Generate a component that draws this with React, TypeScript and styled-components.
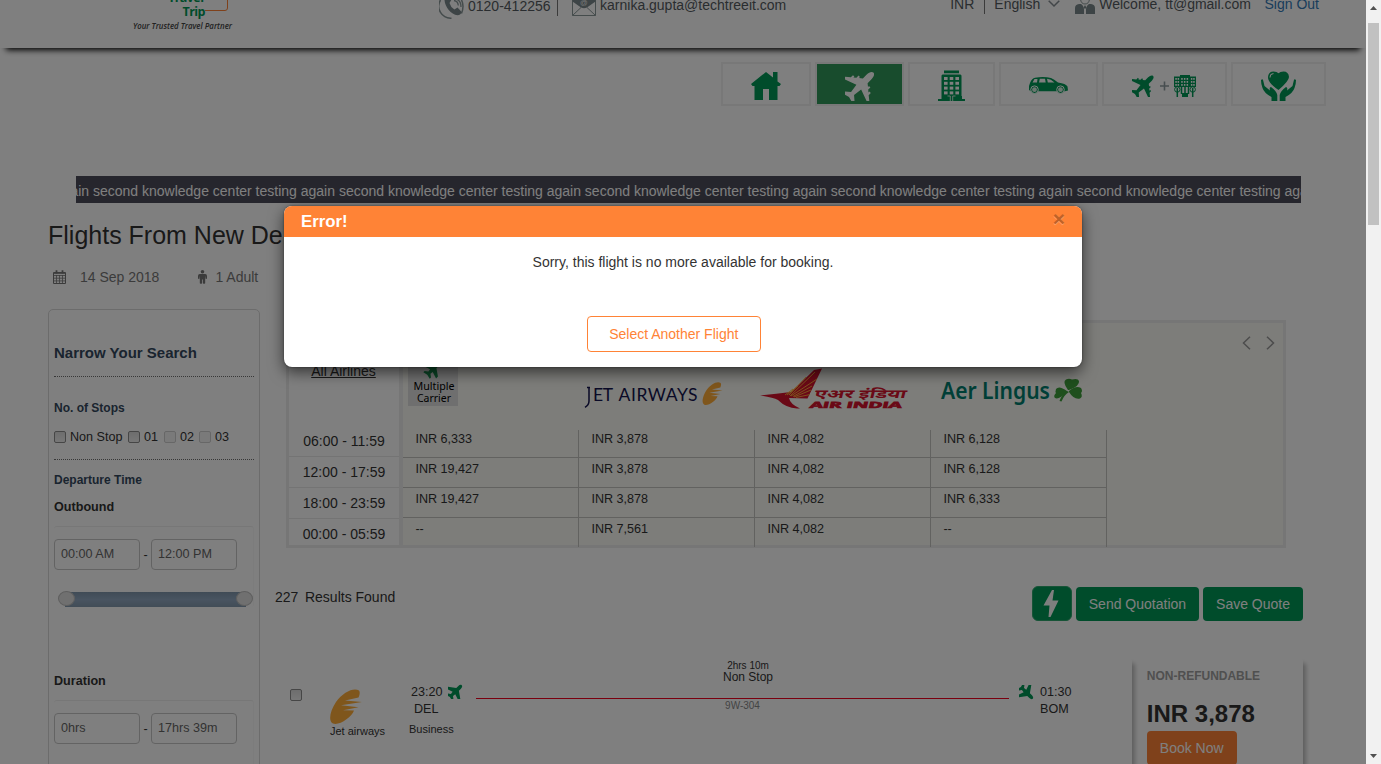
import React from "react";
import styled, { createGlobalStyle } from "styled-components";

const GREEN = "#009856";
const ORANGE = "#ff8336";
const NAVY = "#34495e";

const Global = createGlobalStyle`
  * { box-sizing: border-box; }
  body {
    margin: 0;
    overflow: hidden;
    background: #fff;
    color: #333;
    font: 14px/20px "Liberation Sans", Arial, sans-serif;
  }
  svg { display: block; flex: none; }
`;

const Screen = styled.div`
  display: flex;
  width: 1381px;
  height: 764px;
  overflow: hidden;
`;
const Page = styled.div`
  position: relative;
  width: 1366px;
  height: 764px;
  overflow: hidden;
  background: #fff;
`;

/* ---------- scrollbar ---------- */
const ScrollTrack = styled.div`
  width: 15px;
  background: #f1f1f1;
  display: flex;
  flex-direction: column;
  align-items: center;
  justify-content: space-between;
  padding: 6px 0;
`;
const ScrollThumb = styled.div`
  width: 11px;
  height: 202px;
  margin-top: 13px;
  margin-bottom: auto;
  background: #c1c1c1;
`;

/* ---------- header ---------- */
const Header = styled.header`
  height: 48px;
  display: flex;
  align-items: flex-start;
  box-shadow: 0 8px 6px -6px #000;
`;
const LogoBox = styled.div`
  margin-left: 130px;
  width: 309px;
`;
const HeaderText = styled.span<{ $left?: number; $up?: number; $link?: boolean }>`
  margin-left: ${(p) => p.$left ?? 0}px;
  margin-top: ${(p) => -(p.$up ?? 5)}px;
  white-space: nowrap;
  color: ${(p) => (p.$link ? "#337ab7" : "#555b60")};
`;
const Divider = styled.i<{ $left: number; $h: number }>`
  width: 1px;
  height: ${(p) => p.$h}px;
  margin-left: ${(p) => p.$left}px;
  background: #777;
`;
const IconSlot = styled.div<{ $left: number }>`
  margin-left: ${(p) => p.$left}px;
`;
const AccountArea = styled.div`
  margin-left: auto;
  margin-right: 47px;
  display: flex;
`;

/* ---------- category navigation ---------- */
const Nav = styled.nav`
  display: flex;
  gap: 4px;
  margin: 14px 0 0 721px;
`;
const NavTile = styled.a<{ $w: number; $active?: boolean }>`
  width: ${(p) => p.$w}px;
  height: 44px;
  padding: 3px ${(p) => (p.$active ? 0 : 1)}px 0 ${(p) => (p.$active ? 1 : 0)}px;
  border: 2px solid #f0f0f0;
  background: ${(p) => (p.$active ? "#30985a" : "#fff")};
  display: flex;
  align-items: center;
  justify-content: center;
  gap: 5px;
`;

const Marquee = styled.div`
  width: 1225px;
  height: 27px;
  margin: 70px 0 0 76px;
  padding-top: 5px;
  background: #4c4c5a;
  color: #fff;
  overflow: hidden;
  white-space: nowrap;
`;
const MarqueeText = styled.div`
  margin-left: -21.2px;
`;

const Title = styled.h1`
  margin: 18px 0 0 48px;
  font-size: 25px;
  line-height: 28px;
  font-weight: 400;
`;
const TripInfo = styled.div`
  display: flex;
  align-items: center;
  margin: 18px 0 0 53px;
  height: 20px;
  color: #777;
`;
const TripText = styled.span<{ $left: number }>`
  margin-left: ${(p) => p.$left}px;
`;

const Main = styled.main`
  display: flex;
  align-items: flex-start;
  margin: 22px 0 0 48px;
`;

/* ---------- filters ---------- */
const Sidebar = styled.aside`
  width: 212px;
  height: 500px;
  border: 1px solid #d8d8d8;
  border-radius: 5px;
  padding: 33px 5px 0;
  flex: none;
`;
const SideTitle = styled.h2`
  margin: 0;
  padding-bottom: 13px;
  border-bottom: 1px dotted #707070;
  font-size: 15px;
  line-height: 20px;
  color: ${NAVY};
`;
const FilterTitle = styled.h3<{ $top: number; $plain?: boolean }>`
  margin: ${(p) => p.$top}px 0 0;
  font-size: ${(p) => (p.$plain ? 12.6 : 12)}px;
  line-height: 20px;
  color: ${(p) => (p.$plain ? "#333" : NAVY)};
`;
const StopsRow = styled.div`
  display: flex;
  align-items: center;
  margin-top: 9px;
  padding-bottom: 12px;
  border-bottom: 1px dotted #707070;
  font-size: 12.6px;
`;
const StopLabel = styled.label<{ $w: number }>`
  display: flex;
  align-items: center;
  gap: 4px;
  width: ${(p) => p.$w}px;
  white-space: nowrap;
`;
const Box = styled.span<{ $off?: boolean }>`
  width: 12px;
  height: 12px;
  flex: none;
  border: 1px solid ${(p) => (p.$off ? "#cfcfcf" : "#8c8c8c")};
  border-radius: 2px;
  background: ${(p) => (p.$off ? "#f4f4f4" : "linear-gradient(#dcdcdc, #f0f0f0)")};
`;
const RangeBox = styled.div`
  margin-top: 9px;
  height: 81px;
  padding-top: 12px;
  border-top: 1px solid #efefef;
  border-right: 1px solid #f8f8f8;
  border-radius: 3px;
`;
const RangeInputs = styled.div`
  display: flex;
  align-items: center;
  font-size: 12.6px;
`;
const RangeField = styled.div`
  width: 86px;
  height: 31px;
  padding: 4px 6px;
  border: 1px solid #c6c6c6;
  border-radius: 4px;
  color: #666;
`;
const Dash = styled.span`
  width: 11px;
  text-align: center;
`;
const Slider = styled.div`
  display: flex;
  align-items: center;
  margin: 21px 0 0 4px;
  height: 15px;
`;
const SliderBar = styled.div`
  flex: 1;
  height: 15px;
  margin: 1px -10px -1px;
  background: linear-gradient(#8096ac, #92a9c2 50%, #8399ae);
`;
const SliderKnob = styled.div`
  position: relative;
  width: 17px;
  height: 15px;
  border-radius: 50%;
  border: 1px solid #bdbdbd;
  background: #e0e0e0;
`;

/* ---------- fare matrix ---------- */
const Content = styled.section`
  flex: 1;
`;
const Matrix = styled.div`
  display: flex;
  width: 1000px;
  height: 228px;
  margin: 11px 0 0 26px;
  border: 3px solid #ededed;
`;
const TimeCol = styled.div`
  width: 114px;
  height: 222px;
  overflow: hidden;
  border-right: 4px solid #ededed;
  text-align: center;
`;
const AllAirlines = styled.div`
  margin: 38px 0 45px;
  padding-right: 1px;
  text-decoration: underline;
`;
const TimeSlot = styled.div`
  height: 31px;
  padding-top: 5px;
  border-bottom: 1px solid #e8e8e8;
`;
const Fares = styled.div`
  flex: 1;
  background: #fafaf5;
`;
const LogoRow = styled.div`
  display: flex;
  height: 107px;
`;
const LogoCell = styled.div`
  width: 176px;
  height: 107px;
  padding: 37px 0 0 5px;
`;
const Arrows = styled.div`
  display: flex;
  gap: 15px;
  margin: 13px 8.5px 0 auto;
`;
const FareRow = styled.div<{ $h: number }>`
  display: flex;
  height: ${(p) => p.$h}px;
`;
const FareCell = styled.div<{ $first?: boolean; $last?: boolean }>`
  width: 176px;
  padding: ${(p) => (p.$first ? 0 : 1)}px 0 0 12.4px;
  border-right: 1px solid #c4c4c0;
  border-bottom: ${(p) => (p.$last ? "none" : "1px solid #c4c4c0")};
  font-size: 12.6px;
  line-height: ${(p) => (p.$first ? 18 : 20)}px;
`;

/* ---------- results ---------- */
const ResultsBar = styled.div`
  display: flex;
  align-items: flex-start;
  gap: 4px;
  width: 1028px;
  margin: 38px 0 0 15px;
`;
const Count = styled.span`
  margin: 1px 2.6px 0 0;
`;
const Found = styled.span`
  margin: 1px auto 0 0;
`;
const QuickButton = styled.button`
  width: 40px;
  height: 35px;
  padding: 0 1px 0 0;
  display: flex;
  align-items: center;
  justify-content: center;
  border: 1px solid #2fa86f;
  border-radius: 6px;
  background: ${GREEN};
`;
const Button = styled.button<{ $bg: string }>`
  height: 34px;
  margin-top: 1px;
  padding: 6px 13px;
  border: 0;
  border-radius: 4px;
  background: ${(p) => p.$bg};
  color: #fff;
  font: 14px/20px "Liberation Sans", Arial, sans-serif;
  white-space: nowrap;
`;
const Flight = styled.div`
  display: flex;
  margin: 37px 0 0 15px;
  height: 140px;
`;
const FlightCard = styled.div`
  display: flex;
  align-items: flex-start;
  width: 857px;
  padding: 0 0 0 15px;
  border-radius: 4px;
  box-shadow: 4px 4px 4px -1px rgba(0, 0, 0, 0.25);
  clip-path: inset(0 -10px 0 0);
`;
const PickBox = styled.div`
  width: 40px;
  padding-top: 31px;
`;
const Airline = styled.div`
  width: 79px;
  padding-top: 31px;
  font-size: 11px;
  line-height: 14px;
`;
const Endpoint = styled.div<{ $w: number }>`
  width: ${(p) => p.$w}px;
  padding-top: 26px;
  font-size: 12.6px;
  line-height: 17px;
`;
const EndLine = styled.div<{ $left?: number }>`
  display: flex;
  gap: 5px;
  padding-left: ${(p) => p.$left ?? 0}px;
  white-space: nowrap;
`;
const Cabin = styled.div`
  margin-top: 4px;
  font-size: 11px;
  line-height: 14px;
`;
const Leg = styled.div`
  width: 533px;
  padding: 2px 0 0;
  text-align: center;
`;
const LegText = styled.div<{ $size: number; $lh: number; $muted?: boolean; $shift?: number }>`
  font-size: ${(p) => p.$size}px;
  line-height: ${(p) => p.$lh}px;
  padding-left: ${(p) => p.$shift ?? 11}px;
  color: ${(p) => (p.$muted ? "#888" : "#333")};
`;
const LegLine = styled.div`
  height: 1px;
  margin: 15px 0 1px;
  background: #f5001e;
`;
const ArriveIcon = styled.div`
  padding: 27px 6px 0 10px;
`;
const PriceCard = styled.div`
  width: 171px;
  padding: 8px 0 0 14.8px;
  border-radius: 4px;
  box-shadow: 4px 4px 4px -1px rgba(0, 0, 0, 0.25);
  clip-path: inset(0 -10px 0 0);
`;
const Refund = styled.div`
  font-size: 12px;
  font-weight: 700;
  color: #a0a0a0;
`;
const Price = styled.div`
  margin: 14px 0 2px;
  font-size: 24px;
  line-height: 28px;
  font-weight: 700;
`;

/* ---------- dialog ---------- */
const Backdrop = styled.div`
  position: absolute;
  inset: 0;
  padding: 206px 0 0 284px;
  background: rgba(0, 0, 0, 0.5);
`;
const Dialog = styled.div`
  width: 798px;
  height: 161px;
  border-radius: 8px;
  background: #fff;
  overflow: hidden;
  box-shadow: 0 5px 15px rgba(0, 0, 0, 0.6), 0 0 2px rgba(0, 0, 0, 0.5);
`;
const DialogHead = styled.div`
  display: flex;
  justify-content: space-between;
  height: 31px;
  padding: 6px 17px 0;
  background: ${ORANGE};
  color: #fff;
  font-size: 16.8px;
  font-weight: 700;
`;
const Close = styled.span`
  margin-top: -3px;
  font-size: 21px;
  color: #000;
  opacity: 0.25;
  text-shadow: 0 1px 0 #fff;
`;
const DialogBody = styled.div`
  display: flex;
  flex-direction: column;
  align-items: center;
  padding-top: 15px;
`;
const OutlineButton = styled.button`
  width: 174px;
  height: 36px;
  margin: 44px 18px 0 0;
  padding: 0 0.5px 0 0;
  border: 1px solid ${ORANGE};
  border-radius: 4px;
  background: #fff;
  color: ${ORANGE};
  font: 14px/20px "Liberation Sans", Arial, sans-serif;
`;

/* ---------- drawings ---------- */
const JET =
  "M12 0C13.5 0 14.200 2 14.200 4V7.600L16.200 9.200V8.300H17.500V10.300L19 11.600V10.700H20.300V12.700L23.200 15V16.800L14.200 13.600L13.400 19.400L16.800 22.300V24L12 22.700L7.200 24V22.300L10.600 19.400L9.800 13.600L.8 16.800V15L3.700 12.700V10.700H5V11.600L6.500 10.300V8.300H7.800V9.200L9.800 7.600V4C9.800 2 10.500 0 12 0Z";
const SMALL_JET =
  "M12 0C13.800 0 14.500 2 14.500 4V8L23.800 14.500V18L14.500 15L14 18.800L18 21.800V24.200L12 22.800L6 24.200V21.800L10 18.800L9.500 15L.2 18V14.500L9.500 8V4C9.500 2 10.200 0 12 0Z";

const Plane = ({ size, color = GREEN, turn = 45 }: { size: number; color?: string; turn?: number }) => (
  <svg width={size} height={size} viewBox="1.8 1.8 20.4 20.4">
    <path d={size < 20 ? SMALL_JET : JET} fill={color} transform={`rotate(${turn} 12 12)`} />
  </svg>
);

const BrandLogo = () => (
  <svg width="110" height="34" viewBox="130 0 110 34">
    <g fontFamily="'Open Sans', sans-serif" fontWeight="700">
      <text x="168" y="1.500" fontSize="12.500" fill={GREEN} textLength="36">Travel</text>
      <text x="182.5" y="16.200" fontSize="12.500" fill={GREEN} textLength="23">Trip</text>
      <text x="133" y="29" fontSize="8.600" fontStyle="italic" fontWeight="600" fill="#444" textLength="99" lengthAdjust="spacingAndGlyphs">
        Your Trusted Travel Partner
      </text>
    </g>
    <path d="M205 10.5H225Q227.5 10.5 227.5 8V-1" fill="none" stroke={ORANGE} />
  </svg>
);

const PhoneIcon = () => (
  <svg width="25" height="19" viewBox="0 0 25 19" fill="none">
    <path d="M1.500 0A12 12 0 0 0 12.5 18.2" stroke="#8a9899" strokeWidth="1.500" />
    <path d="M22.5 0Q25.5 6 22.5 13.5" stroke="#8a9899" strokeWidth="1.500" />
    <path d="M5.500 0C6 7 12 14.5 18.5 15.3Q22 15 22.7 12L18.5 7.6L15.4 9.6Q11.5 7 10.5 3L12.3 0Z" fill="#7b898c" />
    <path d="M15 .5Q19 1 19.3 5.5M18 -.5Q22 1 22 7" stroke="#8a9899" strokeWidth="1.300" />
  </svg>
);

const MailIcon = () => (
  <svg width="24" height="16" viewBox="0 0 24 16">
    <path d="M.5 0V15.500H23.5V0" fill="none" stroke="#8a9899" />
    <path d="M.5 0H23.5V1.500L15 7.500Q12 9 9 7.500L.5 1.500Z" fill="#7b898c" />
    <path d="M.5 15.500L9 7.500M23.5 15.500L15 7.500" stroke="#8a9899" />
    <text x="8" y="4.500" fontSize="7.500" fill="#eee" fontFamily="Liberation Sans">@</text>
  </svg>
);

const UsersIcon = () => (
  <svg width="20" height="14" viewBox="0 0 20 14">
    <path d="M0 14V8Q0 4.500 4 4H6Q9 6 9 9.500V14ZM11 14V9.500Q11 6 14 4H16Q20 4.500 20 8V14Z" fill="#7b898c" />
    <path d="M5.500 -1Q6 4 10 4T14.500 -1" fill="none" stroke="#8a9899" />
    <path d="M10 5L8.600 7.500L10 9L11.400 7.500Z" fill="#7b898c" />
  </svg>
);

const HomeIcon = () => (
  <svg width="30" height="30" viewBox="0 0 30 30" fill={GREEN}>
    <path d="M0 13L15 1L22 6.500V1H26.500V10.500L30 13L28.500 15H26.500V29H18V18H12V29H3.500V15H1.500Z" />
  </svg>
);

const TowerIcon = () => (
  <svg width="27" height="31" viewBox="0 0 27 31">
    <path d="M6 .5H21V3.300H6ZM4.500 4.500H22.500L23.500 5.500V26H24V29H27V31H0V29H3.500V5.500Z" fill={GREEN} />
    {[7, 11.800, 16.600, 21.400].map((y) =>
      [6, 11.700, 17.400].map((x) => <rect key={`${x}-${y}`} x={x} y={y} width="3.600" height="3" fill="#fff" />)
    )}
    <path d="M9.500 26H12.300V31M17.500 26H14.700V31" fill="none" stroke="#fff" strokeWidth=".8" />
  </svg>
);

const CarIcon = () => (
  <svg width="39" height="17" viewBox="0 0 39 17">
    <path d="M1 6Q3 1 6 .7Q15 -.6 22 1Q25 2 29 5.500Q37 6.500 38.500 9.500L39 13.500L36 14.300H2L0 13V9Z" fill={GREEN} />
    <path d="M3.500 5.500L5.500 2H8.500L8 5.500ZM10 5.500L10.800 1.800H16L16.700 5.500ZM18 1.800Q22 2 25.500 5.500H18.800Z" fill="#fff" />
    <g fill={GREEN} stroke="#fff" strokeWidth="1">
      <circle cx="5.500" cy="12.700" r="3.800" />
      <circle cx="31.500" cy="12.700" r="3.800" />
    </g>
    <g fill="#d9efe3">
      <circle cx="5.500" cy="12.700" r="2.400" />
      <circle cx="31.500" cy="12.700" r="2.400" />
    </g>
  </svg>
);

const PlusIcon = () => (
  <svg width="9" height="10" viewBox="0 0 9 10">
    <path d="M0 5H9M4.500 .5V9.500" stroke="#8f9ca0" strokeWidth="1.600" />
  </svg>
);

const HotelIcon = () => (
  <svg width="22" height="22" viewBox="0 0 22 22">
    <path d="M6 0H16V1.500H22V12H0V1.500H6Z" fill={GREEN} />
    <g fill="#fff">
      {[3, 6, 9].map((y) =>
        [1.300, 3.600, 7.200, 9.900, 12.600, 16.900, 19.200].map((x) => (
          <rect key={`${x}-${y}`} x={x} y={y} width="1.500" height="1.800" />
        ))
      )}
    </g>
    <g fill="none" stroke={GREEN}>
      <circle cx="3.300" cy="14.500" r="2.700" />
      <circle cx="18.700" cy="14.500" r="2.700" />
      <path d="M3.300 13V22M18.700 13V22M7.500 12V19M11 12V19M14.500 12V19" strokeWidth="1.500" />
    </g>
    <path d="M8 18H14V22H8Z" fill={GREEN} />
  </svg>
);

const HAND =
  "M0 9Q2 7 2.300 10L3.500 15L9 19.500Q8 16.500 10 16Q15.500 20 16.300 24V30H10.500V26Q3 22 1.500 17Q0 13 0 9Z";

const CareIcon = () => (
  <svg width="35" height="30" viewBox="0 0 35 30">
    <path d="M17.500 19C10 14 7 10 7 6Q7.500 .5 12.500 .5Q16 .5 17.500 2.200Q19 .5 22.500 .5Q27.500 .5 28 6Q28 10 17.500 19Z" fill={GREEN} />
    <path d="M9 6.500Q9 3 12.500 2.500" fill="none" stroke="#fff" strokeWidth="1.100" />
    <g fill={GREEN}>
      <path d={HAND} />
      <path d={HAND} transform="matrix(-1 0 0 1 35 0)" />
    </g>
  </svg>
);

const CalendarIcon = () => (
  <svg width="13" height="14" viewBox="0 0 13 14" fill="none" stroke="#777">
    <path d="M.5 2.500H12.500V13.500H.5Z" />
    <path d="M.5 3.500H12.500M.5 5.500H12.500M.5 8.200H12.500M.5 10.900H12.500M3.500 5V13.500M6.500 5V13.500M9.500 5V13.500" strokeWidth=".8" />
    <path d="M3.500 .3V3.500M9.500 .3V3.500" strokeWidth="1.800" />
  </svg>
);

const ManIcon = () => (
  <svg width="9" height="14" viewBox="0 0 9 14" fill="#777">
    <circle cx="4.500" cy="1.800" r="1.800" />
    <path d="M1.800 4H7.200Q9 4.200 9 6V8.500Q8.300 9.300 7.500 8.500V6.500H7.200V13.200Q6 14.500 4.900 13.200V9.500H4.100V13.200Q3 14.500 1.800 13.200V6.500H1.500V8.500Q.7 9.300 0 8.500V6Q0 4.200 1.800 4Z" />
  </svg>
);

const Chevron = ({ d, w, h, color }: { d: string; w: number; h: number; color: string }) => (
  <svg width={w} height={h} viewBox={`0 0 ${w} ${h}`}>
    <path d={d} fill="none" stroke={color} strokeWidth="1.500" />
  </svg>
);

const FEATHER =
  "M29 1.500C24-2 13 3 6 13C0 22-2 32 3 34.500C9 37 22 28 24 21.500L13 21.200L28.500 18.200L11 16.300L32 13L15 11.500L28.500 8.500C30 5 30 2.500 29 1.500Z";

const JetFeather = () => (
  <svg width="32" height="35" viewBox="0 0 32 35">
    <path d={FEATHER} fill="#ffac38" />
  </svg>
);

const MultiCarrier = () => (
  <svg width="50" height="46" viewBox="0 0 50 46">
    <rect width="50" height="46" fill="#dedede" />
    <g transform="translate(16 0) scale(.75)">
      <path d={SMALL_JET} fill="#168a4c" transform="rotate(45 12 12)" />
    </g>
    <g fontFamily="'Noto Sans', sans-serif" fontSize="10.500" fill="#000">
      <text x="5.500" y="29.700" textLength="41" lengthAdjust="spacingAndGlyphs">Multiple</text>
      <text x="9" y="41.700" textLength="34" lengthAdjust="spacingAndGlyphs">Carrier</text>
    </g>
  </svg>
);

const JetAirways = () => (
  <svg width="144" height="50" viewBox="584 360 144 50">
    <g fill="#14144e" fontFamily="Lato, sans-serif">
      <text x="593" y="401" fontSize="17.500" textLength="20">ET</text>
      <text x="618.500" y="401" fontSize="17.500" textLength="79">AIRWAYS</text>
    </g>
    <path d="M587 387.500H590M589 387.500V401Q589 405 585 407.300" fill="none" stroke="#14144e" strokeWidth="1.500" />
    <g transform="translate(702.500 382) scale(.625 .657)">
      <path d={FEATHER} fill="#ffac38" />
    </g>
  </svg>
);

const AirIndia = () => (
  <svg width="153" height="50" viewBox="760 360 153 50">
    <path d="M822 368.500L814 370Q803 381 791 392Q775 394 760 395.500Q773 397.500 778 400Q786 408 797 408.500H800Q790 404 789 398L807.500 398.500Z" fill="#d4122d" />
    <g stroke="#ffb53a" strokeWidth=".9">
      <path d="M790 396L815 372M791 396L817 379M793 396.500L812 386M794 397L811 390M796 397.500L810 394.500M789 395L806 377M787 395L798 386M785 395L793 389" />
    </g>
    <g fill="#d4122d" fontWeight="700" transform="skewX(-14)">
      <text x="913" y="398.500" fontSize="12" fontFamily="'Noto Sans Devanagari','Noto Sans',sans-serif" textLength="92" lengthAdjust="spacingAndGlyphs">
        एअर इंडिया
      </text>
      <text x="911" y="408.300" fontSize="8.500" fontFamily="'Open Sans',sans-serif" stroke="#d4122d" strokeWidth=".7" textLength="92" lengthAdjust="spacingAndGlyphs">
        AIR INDIA
      </text>
    </g>
  </svg>
);

const AerLingus = () => (
  <svg width="150" height="50" viewBox="936 360 150 50">
    <text x="941" y="398.700" fontSize="23" fontWeight="600" fontFamily="'Noto Sans', sans-serif" fill="#007f6e" textLength="109" lengthAdjust="spacingAndGlyphs">
      Aer Lingus
    </text>
    <g fill="#3f9f3b">
      <path d="M1068 390Q1062 382 1066 379.500Q1069 378 1072 379.500Q1078 378 1079 381Q1080 386 1069 390Z" />
      <path d="M1067 391Q1059 385 1056 389Q1055 392 1056 393Q1053 396 1055 398Q1059 400 1067 392Z" />
      <path d="M1069 391Q1076 385 1081 388Q1083 391 1081 393Q1083 397 1080 398.500Q1074 400 1069 392Z" />
      <path d="M1067 391L1069 392Q1064 395 1061.500 401.500L1059.500 401Q1062 394 1067 391Z" />
    </g>
  </svg>
);

const slots = ["06:00 - 11:59", "12:00 - 17:59", "18:00 - 23:59", "00:00 - 05:59"];
const fares = [
  ["INR 6,333", "INR 3,878", "INR 4,082", "INR 6,128"],
  ["INR 19,427", "INR 3,878", "INR 4,082", "INR 6,128"],
  ["INR 19,427", "INR 3,878", "INR 4,082", "INR 6,333"],
  ["--", "INR 7,561", "INR 4,082", "--"],
];
const rowHeights = [28, 30, 30, 29];
const logos = [MultiCarrier, JetAirways, AirIndia, AerLingus];

const Range = ({ from, to }: { from: string; to: string }) => (
  <RangeBox>
    <RangeInputs>
      <RangeField>{from}</RangeField>
      <Dash>-</Dash>
      <RangeField>{to}</RangeField>
    </RangeInputs>
    <Slider>
      <SliderKnob />
      <SliderBar />
      <SliderKnob />
    </Slider>
  </RangeBox>
);

export default function App() {
  return (
    <Screen>
      <Global />
      <Page>
        <Header>
          <LogoBox><BrandLogo /></LogoBox>
          <PhoneIcon />
          <HeaderText $left={4} $up={4}>0120-412256</HeaderText>
          <Divider $left={6} $h={16} />
          <IconSlot $left={14}><MailIcon /></IconSlot>
          <HeaderText $left={4.5}>karnika.gupta@techtreeit.com</HeaderText>
          <AccountArea>
            <HeaderText $up={6}>INR</HeaderText>
            <Divider $left={10} $h={14} />
            <HeaderText $left={9} $up={6}>English</HeaderText>
            <IconSlot $left={8}><Chevron w={12} h={8} d="M.7 .7L6 6L11.300 .7" color="#858d92" /></IconSlot>
            <IconSlot $left={15}><UsersIcon /></IconSlot>
            <HeaderText $left={4} $up={6}>Welcome, tt@gmail.com</HeaderText>
            <HeaderText $left={13.6} $up={6} $link>Sign Out</HeaderText>
          </AccountArea>
        </Header>

        <Nav>
          <NavTile $w={90}><HomeIcon /></NavTile>
          <NavTile $w={89} $active><Plane size={31} color="#fff" /></NavTile>
          <NavTile $w={87}><TowerIcon /></NavTile>
          <NavTile $w={99}><CarIcon /></NavTile>
          <NavTile $w={125}><Plane size={23} /><PlusIcon /><HotelIcon /></NavTile>
          <NavTile $w={95}><CareIcon /></NavTile>
        </Nav>

        <Marquee>
          <MarqueeText>{"again second knowledge center testing ".repeat(6)}</MarqueeText>
        </Marquee>

        <Title>Flights From New Delhi</Title>
        <TripInfo>
          <CalendarIcon />
          <TripText $left={14}>14 Sep 2018</TripText>
          <IconSlot $left={39}><ManIcon /></IconSlot>
          <TripText $left={8}>1 Adult</TripText>
        </TripInfo>

        <Main>
          <Sidebar>
            <SideTitle>Narrow Your Search</SideTitle>
            <FilterTitle $top={21}>No. of Stops</FilterTitle>
            <StopsRow>
              <StopLabel $w={74}><Box />Non Stop</StopLabel>
              <StopLabel $w={36}><Box />01</StopLabel>
              <StopLabel $w={35}><Box $off />02</StopLabel>
              <StopLabel $w={35}><Box $off />03</StopLabel>
            </StopsRow>
            <FilterTitle $top={10}>Departure Time</FilterTitle>
            <FilterTitle $top={7} $plain>Outbound</FilterTitle>
            <Range from="00:00 AM" to="12:00 PM" />
            <FilterTitle $top={64} $plain>Duration</FilterTitle>
            <Range from="0hrs" to="17hrs 39m" />
          </Sidebar>

          <Content>
            <Matrix>
              <TimeCol>
                <AllAirlines>All Airlines</AllAirlines>
                {slots.map((s) => <TimeSlot key={s}>{s}</TimeSlot>)}
              </TimeCol>
              <Fares>
                <LogoRow>
                  {logos.map((Logo, i) => <LogoCell key={i}><Logo /></LogoCell>)}
                  <Arrows>
                    <Chevron w={9} h={14} d="M8 .7L1.500 7L8 13.300" color="#999" />
                    <Chevron w={9} h={14} d="M1 .7L7.500 7L1 13.300" color="#999" />
                  </Arrows>
                </LogoRow>
                {fares.map((row, r) => (
                  <FareRow key={r} $h={rowHeights[r]}>
                    {row.map((fare, c) => (
                      <FareCell key={c} $first={r === 0} $last={r === 3}>{fare}</FareCell>
                    ))}
                  </FareRow>
                ))}
              </Fares>
            </Matrix>

            <ResultsBar>
              <Count>227</Count>
              <Found>Results Found</Found>
              <QuickButton>
                <svg width="16" height="27" viewBox="0 0 16 27">
                  <path d="M9 0L.5 15.500H6.500L5.500 27H7.500L15.500 10.500H9.500L11 0Z" fill="#fff" />
                </svg>
              </QuickButton>
              <Button $bg={GREEN}>Send Quotation</Button>
              <Button $bg={GREEN}>Save Quote</Button>
            </ResultsBar>

            <Flight>
              <FlightCard>
                <PickBox><Box as="div" /></PickBox>
                <Airline>
                  <JetFeather />
                  Jet airways
                </Airline>
                <Endpoint $w={67}>
                  <EndLine $left={2}>23:20 <Plane size={15} /></EndLine>
                  <EndLine $left={5}>DEL</EndLine>
                  <Cabin>Business</Cabin>
                </Endpoint>
                <Leg>
                  <LegText $size={10} $lh={11}>2hrs 10m</LegText>
                  <LegText $size={12} $lh={12}>Non Stop</LegText>
                  <LegLine />
                  <LegText $size={10} $lh={12} $muted $shift={0}>9W-304</LegText>
                </Leg>
                <ArriveIcon><Plane size={15} turn={135} /></ArriveIcon>
                <Endpoint $w={60}>
                  <EndLine>01:30</EndLine>
                  <EndLine>BOM</EndLine>
                </Endpoint>
              </FlightCard>
              <PriceCard>
                <Refund>NON-REFUNDABLE</Refund>
                <Price>INR 3,878</Price>
                <Button $bg={ORANGE}>Book Now</Button>
              </PriceCard>
            </Flight>
          </Content>
        </Main>

        <Backdrop>
          <Dialog role="dialog">
            <DialogHead>
              Error!
              <Close>×</Close>
            </DialogHead>
            <DialogBody>
              Sorry, this flight is no more available for booking.
              <OutlineButton>Select Another Flight</OutlineButton>
            </DialogBody>
          </Dialog>
        </Backdrop>
      </Page>
      <ScrollTrack>
        <svg width="7" height="4" viewBox="0 0 7 4"><path d="M3.500 0L7 4H0Z" fill="#505050" /></svg>
        <ScrollThumb />
        <svg width="7" height="4" viewBox="0 0 7 4"><path d="M3.500 4L7 0H0Z" fill="#505050" /></svg>
      </ScrollTrack>
    </Screen>
  );
}
